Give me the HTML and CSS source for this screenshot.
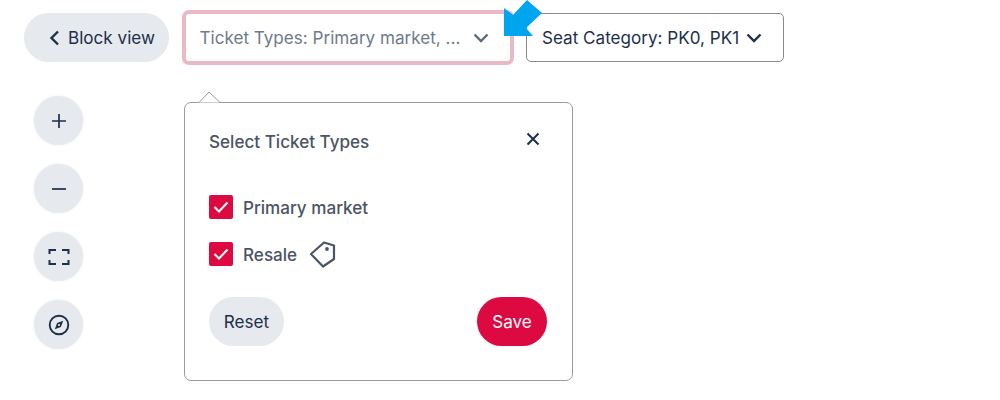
FILE: index.html
```html
<!DOCTYPE html>
<html lang="en">
<head>
<meta charset="utf-8">
<title>Ticket filters</title>
<link rel="stylesheet" href="styles.css">
</head>
<body>
<div class="page">
  <div class="toolbar">
    <button class="pill back">
      <svg class="ico" width="12" height="16" viewBox="0 0 12 16"><path d="M10 1.5 L3.5 8 L10 14.5" fill="none" stroke="#1c2f4c" stroke-width="2.4"/></svg>
      <span>Block view</span>
    </button>
    <div class="focus-ring">
      <button class="select muted">
        <span>Ticket Types: Primary market, ...</span>
        <svg width="16" height="10" viewBox="0 0 16 10"><path d="M1.5 1.5 L8 8 L14.5 1.5" fill="none" stroke="#5b6a7e" stroke-width="2.4"/></svg>
      </button>
    </div>
    <button class="select seat">
      <span>Seat Category: PK0, PK1</span>
      <svg width="16" height="10" viewBox="0 0 16 10"><path d="M1.5 1.5 L8 8 L14.5 1.5" fill="none" stroke="#1c2f4c" stroke-width="2.4"/></svg>
    </button>
  </div>
  <div class="controls">
    <button class="round"><svg width="16" height="16" viewBox="0 0 16 16"><path d="M8 1 V15 M1 8 H15" stroke="#1c2f4c" stroke-width="1.7" fill="none"/></svg></button>
    <button class="round"><svg width="16" height="16" viewBox="0 0 16 16"><path d="M1 8 H15" stroke="#1c2f4c" stroke-width="1.7" fill="none"/></svg></button>
    <button class="round"><svg width="22" height="18" viewBox="0 0 22 18"><path d="M1.5 6 V2 H8 M14 2 H20.5 V6 M1.5 12 V16 H8 M14 16 H20.5 V12" stroke="#1c2f4c" stroke-width="2" fill="none"/></svg></button>
    <button class="round"><svg width="22" height="22" viewBox="0 0 22 22"><circle cx="11" cy="11" r="9.3" stroke="#1c2f4c" stroke-width="1.9" fill="none"/><path d="M15.2 6.8 L12.9 12.9 L6.8 15.2 L9.1 9.1 Z" fill="#1c2f4c"/><circle cx="11" cy="11" r="1" fill="#fff"/></svg></button>
  </div>
  <div class="popover">
    <svg class="caret" width="26" height="12" viewBox="0 0 26 12"><path d="M0 11.5 H2 L12 1 L23 11.5 H26" fill="#fff" stroke="#9a9a9a" stroke-width="1"/></svg>
    <div class="pop-head">
      <span>Select Ticket Types</span>
      <svg class="close" width="14" height="14" viewBox="0 0 14 14"><path d="M1.5 1.5 L12.5 12.5 M12.5 1.5 L1.5 12.5" stroke="#1c2f4c" stroke-width="2" fill="none"/></svg>
    </div>
    <div class="options">
      <label class="option">
        <span class="check"><svg width="16" height="12" viewBox="0 0 16 12"><path d="M1.5 6 L6 10.5 L14.5 1.5" fill="none" stroke="#fff" stroke-width="2"/></svg></span>
        <span>Primary market</span>
      </label>
      <label class="option">
        <span class="check"><svg width="16" height="12" viewBox="0 0 16 12"><path d="M1.5 6 L6 10.5 L14.5 1.5" fill="none" stroke="#fff" stroke-width="2"/></svg></span>
        <span>Resale</span>
        <svg class="tag" width="27" height="27" viewBox="0 0 27 27"><path d="M2 13 L15 1.5 L25 4.5 V18 L14 25.5 Z" fill="none" stroke="#4a5563" stroke-width="2.2" stroke-linejoin="round"/><circle cx="18" cy="8" r="1.9" fill="#4a5563"/></svg>
      </label>
    </div>
    <div class="actions">
      <button class="pill reset">Reset</button>
      <button class="pill save">Save</button>
    </div>
  </div>
  <svg class="pointer" width="42" height="40" viewBox="0 0 42 40"><path d="M1 8 L10 15 L24 0 L39 13 L23 28 L30 36 L1 36 Z" fill="#00a5ef"/></svg>
</div>
</body>
</html>
```
FILE: styles.css
```css
* { box-sizing: border-box; }
html, body { margin: 0; height: 100%; background: #fff; }
body { font-family: Inter, "Liberation Sans", sans-serif; color: #1c2f4c; overflow: hidden; }
button { font: inherit; color: inherit; border: 0; background: none; padding: 0; }
.page { position: relative; width: 1000px; height: 400px; padding: 10px 24px 0; }
.toolbar { display: flex; align-items: center; height: 55px; }
.pill { height: 49px; border-radius: 25px; background: #e6e9ed; font-size: 17.1px; }
.back { width: 145px; display: flex; align-items: center; gap: 8px; padding-left: 24px; margin-right: 13px; }
.focus-ring { width: 332px; height: 55px; border: 4px solid #ebb8c6; border-radius: 7px; margin-right: 12px; }
.select { display: flex; align-items: center; font-size: 17.1px; background: #fff; border-radius: 5px; }
.muted { width: 100%; height: 100%; padding: 0 21px 0 13.5px; justify-content: space-between; color: #6e7a8a; }
.seat { width: 258px; height: 49px; border: 1px solid #8a8a8a; padding: 0 21px 0 15px; justify-content: space-between; }
.controls { display: flex; flex-direction: column; gap: 19px; margin: 31px 0 0 10px; width: 49px; }
.round { width: 49px; height: 49px; border-radius: 50%; background: #e6e9ed; display: flex; align-items: center; justify-content: center; box-shadow: 0 0 3px rgba(30,40,60,.08); }
.popover { position: absolute; left: 184px; top: 102px; width: 389px; height: 279px; background: #fff; border: 1px solid #9a9a9a; border-radius: 7px; padding: 0 25px 0 24px; color: #4a5563; font-size: 17.1px; }
.caret { position: absolute; left: 12px; top: -12px; }
.pop-head { display: flex; align-items: center; justify-content: space-between; height: 24px; margin-top: 26px; padding-right: 7px; font-weight: 450; }
.close { margin-bottom: 4px; }
.options { display: flex; flex-direction: column; gap: 23px; margin-top: 42px; }
.option { display: flex; align-items: center; height: 24px; font-weight: 450; }
.check { width: 24px; height: 24px; margin-right: 10px; background: #dd0a41; border-radius: 2px; display: flex; align-items: center; justify-content: center; }
.tag { margin-left: 12px; }
.actions { display: flex; justify-content: space-between; margin-top: 31px; }
.reset { width: 75px; color: #1c2f4c; }
.save { width: 70px; background: #dd0a41; color: #fff; }
.pointer { position: absolute; left: 503px; top: 0; overflow: visible; }
```
